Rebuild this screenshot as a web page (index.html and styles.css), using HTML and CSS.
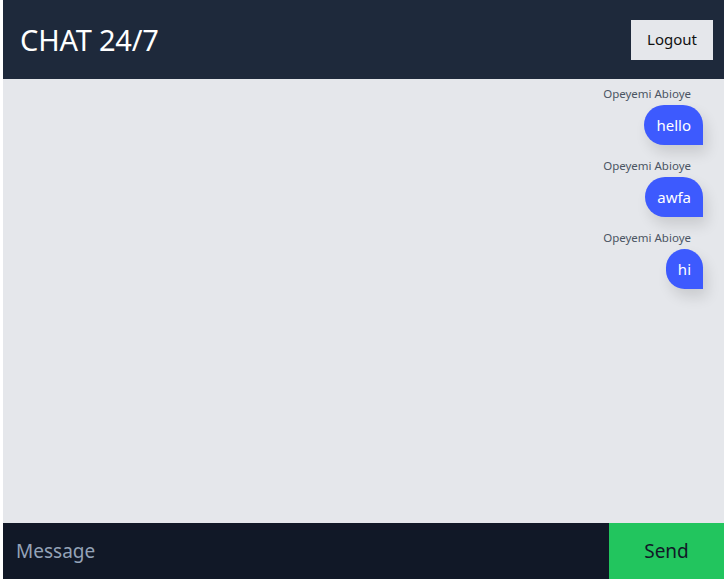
FILE: index.html
```html
<!DOCTYPE html>
<html>
<head>
<meta charset="utf-8">
<link rel="stylesheet" href="styles.css">
</head>
<body>
<div class="app">
  <header class="topbar">
    <h1 class="title">CHAT 24/7</h1>
    <button class="logout">Logout</button>
  </header>
  <main class="chat">
    <div class="msg">
      <div class="name">Opeyemi Abioye</div>
      <div class="bubble">hello</div>
    </div>
    <div class="msg">
      <div class="name">Opeyemi Abioye</div>
      <div class="bubble">awfa</div>
    </div>
    <div class="msg">
      <div class="name">Opeyemi Abioye</div>
      <div class="bubble">hi</div>
    </div>
  </main>
  <form class="composer">
    <input class="input" type="text" placeholder="Message">
    <button class="send" type="button">Send</button>
  </form>
</div>
</body>
</html>
```
FILE: styles.css
```css
* { box-sizing: border-box; }
html, body { margin: 0; padding: 0; background: #ffffff; }
body { font-family: "Noto Sans", "Open Sans", sans-serif; }
.app {
  margin-left: 3px;
  height: 579px;
  display: flex;
  flex-direction: column;
}
.topbar {
  height: 79px;
  background: #1e293b;
  display: flex;
  align-items: center;
  justify-content: space-between;
  padding: 0 11px 0 17px;
}
.title {
  margin: 0;
  color: #ffffff;
  font-weight: 400;
  font-size: 29px;
  letter-spacing: -0.2px;
}
.logout {
  width: 82px;
  height: 40px;
  border: none;
  background: #e5e7eb;
  color: #111;
  font-family: inherit;
  font-size: 15px;
  line-height: 20px;
  padding: 0 0 2px;
}
.chat {
  flex: 1;
  background: #e5e7eb;
  display: flex;
  flex-direction: column;
  align-items: flex-end;
  padding: 6px 21px 0 0;
  gap: 12px;
}
.msg {
  display: flex;
  flex-direction: column;
  align-items: flex-end;
  gap: 2px;
}
.name {
  font-size: 11.5px;
  line-height: 18px;
  color: #4b5563;
  margin-right: 12px;
}
.bubble {
  background: #3d5afe;
  color: #ffffff;
  font-size: 15px;
  line-height: 24px;
  padding: 8px 12px;
  border-radius: 20px 20px 0 20px;
  box-shadow: 4px 8px 14px rgba(0, 0, 0, 0.12);
}
.composer {
  margin: 0;
  height: 56px;
  display: flex;
  background: #111827;
}
.input {
  flex: 1;
  background: transparent;
  border: none;
  outline: none;
  color: #fff;
  font-family: inherit;
  font-size: 19px;
  padding: 0 13px;
}
.input::placeholder { color: #94a3b8; }
.send {
  width: 115px;
  border: none;
  background: #22c55e;
  color: #111827;
  font-family: inherit;
  font-size: 19px;
  padding: 0;
}
```
